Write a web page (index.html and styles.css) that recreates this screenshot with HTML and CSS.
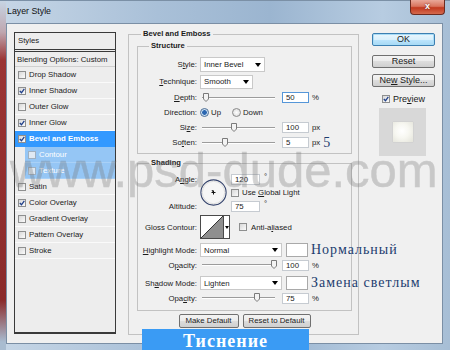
FILE: index.html
```html
<!DOCTYPE html>
<html lang="en">
<head>
    <meta charset="UTF-8">
    <meta name="viewport" content="width=device-width, initial-scale=1.0">
    <title>Layer Style</title>
    <link rel="stylesheet" href="styles.css">
</head>
<body>
    <div class="window">
        <div class="titlebar">
            <span class="title">Layer Style</span>
            <span class="close">x</span>
        </div>
        <div class="client">
            <div class="styles-list">
                <div class="list-head">Styles</div>
                <div class="list-row blend">Blending Options: Custom</div>
                <div class="list-row"><span class="cb"></span>Drop Shadow</div>
                <div class="list-row"><span class="cb on"><svg viewBox="0 0 6 6"><path d="M0.8 3L2.5 4.8L5.3 0.8"/></svg></span>Inner Shadow</div>
                <div class="list-row"><span class="cb"></span>Outer Glow</div>
                <div class="list-row"><span class="cb on"><svg viewBox="0 0 6 6"><path d="M0.8 3L2.5 4.8L5.3 0.8"/></svg></span>Inner Glow</div>
                <div class="list-row sel"><span class="cb on"><svg viewBox="0 0 6 6"><path d="M0.8 3L2.5 4.8L5.3 0.8"/></svg></span>Bevel and Emboss</div>
                <div class="list-row sub"><span class="cb"></span>Contour</div>
                <div class="list-row sub"><span class="cb"></span>Texture</div>
                <div class="list-row"><span class="cb"></span>Satin</div>
                <div class="list-row"><span class="cb on"><svg viewBox="0 0 6 6"><path d="M0.8 3L2.5 4.8L5.3 0.8"/></svg></span>Color Overlay</div>
                <div class="list-row"><span class="cb"></span>Gradient Overlay</div>
                <div class="list-row"><span class="cb"></span>Pattern Overlay</div>
                <div class="list-row"><span class="cb"></span>Stroke</div>
            </div>

            <fieldset class="group outer">
                <legend>Bevel and Emboss</legend>

                <fieldset class="group structure">
                    <legend>Structure</legend>
                    <div class="row">
                        <span class="lbl">S<u>t</u>yle:</span>
                        <div class="select w-style"><span>Inner Bevel</span><i class="arrow"></i></div>
                    </div>
                    <div class="row tech">
                        <span class="lbl"><u>T</u>echnique:</span>
                        <div class="select w-tech"><span>Smooth</span><i class="arrow"></i></div>
                    </div>
                    <div class="row first-slider">
                        <span class="lbl"><u>D</u>epth:</span>
                        <div class="slider"><span class="thumb" style="left: 5%"><svg viewBox="0 0 6 9"><path d="M0.5 0.5H5.5V6L3 8.5L0.5 6Z"/></svg></span></div>
                        <span class="num focus">50</span><span class="unit">%</span>
                    </div>
                    <div class="row">
                        <span class="lbl">Direction:</span>
                        <span class="radio on"></span><span class="radio-text">Up</span>
                        <span class="radio down"></span><span class="radio-text">Down</span>
                    </div>
                    <div class="row">
                        <span class="lbl">Si<u>z</u>e:</span>
                        <div class="slider"><span class="thumb" style="left: 44%"><svg viewBox="0 0 6 9"><path d="M0.5 0.5H5.5V6L3 8.5L0.5 6Z"/></svg></span></div>
                        <span class="num">100</span><span class="unit">px</span>
                    </div>
                    <div class="row">
                        <span class="lbl">So<u>f</u>ten:</span>
                        <div class="slider"><span class="thumb" style="left: 32%"><svg viewBox="0 0 6 9"><path d="M0.5 0.5H5.5V6L3 8.5L0.5 6Z"/></svg></span></div>
                        <span class="num">5</span><span class="unit">px</span><span class="note">5</span>
                    </div>
                </fieldset>

                <fieldset class="group shading">
                    <legend>Shading</legend>
                    <div class="angle">
                        <span class="lbl a-lbl">A<u>n</u>gle:</span>
                        <svg class="dial" viewBox="0 0 27 27"><circle class="ring" cx="13.5" cy="13.5" r="12.6"/><circle class="inner" cx="13.5" cy="13.5" r="11.2"/><path d="M11.5 13.5H15.5M13.5 11.5V15.5M13.5 13.5L12 11"/></svg>
                        <span class="field a-val"><span class="num short">120</span><span class="deg">°</span></span>
                        <span class="check a-check"><span class="cb"></span><span>Use <u>G</u>lobal Light</span></span>
                        <span class="lbl a-lbl2">Altitude:</span>
                        <span class="field a-val2"><span class="num short">75</span><span class="deg">°</span></span>
                    </div>
                    <div class="row gloss">
                        <span class="lbl">Gloss Contour:</span>
                        <div class="contour">
                            <svg viewBox="0 0 22 22"><path class="tri" d="M0 22L22 0V22Z"/><path class="diag" d="M0 22L22 0"/></svg>
                            <span class="contour-drop"><i class="arrow tiny"></i></span>
                        </div>
                        <span class="cb aa"></span><span>Anti-a<u>l</u>iased</span>
                    </div>
                    <div class="row mode">
                        <span class="lbl"><u>H</u>ighlight Mode:</span>
                        <div class="select w-mode"><span>Normal</span><i class="arrow"></i></div>
                        <span class="swatch"></span><span class="note">Нормальный</span>
                    </div>
                    <div class="row opacity">
                        <span class="lbl">O<u>p</u>acity:</span>
                        <div class="slider"><span class="thumb" style="left: 99%"><svg viewBox="0 0 6 9"><path d="M0.5 0.5H5.5V6L3 8.5L0.5 6Z"/></svg></span></div>
                        <span class="num">100</span><span class="unit">%</span>
                    </div>
                    <div class="row mode second">
                        <span class="lbl">Sh<u>a</u>dow Mode:</span>
                        <div class="select w-mode"><span>Lighten</span><i class="arrow"></i></div>
                        <span class="swatch"></span><span class="note">Замена светлым</span>
                    </div>
                    <div class="row opacity">
                        <span class="lbl">Opa<u>c</u>ity:</span>
                        <div class="slider"><span class="thumb" style="left: 75%"><svg viewBox="0 0 6 9"><path d="M0.5 0.5H5.5V6L3 8.5L0.5 6Z"/></svg></span></div>
                        <span class="num">75</span><span class="unit">%</span>
                    </div>
                </fieldset>

                <div class="defaults">
                    <span class="btn make">Make Default</span>
                    <span class="btn reset-def">Reset to Default</span>
                </div>
            </fieldset>

            <div class="side">
                <div class="btn big ok">OK</div>
                <div class="btn big reset">Reset</div>
                <div class="btn big new">Ne<u>w</u> Style...</div>
                <div class="preview-check"><span class="cb on"><svg viewBox="0 0 6 6"><path d="M0.8 3L2.5 4.8L5.3 0.8"/></svg></span><span>Pre<u>v</u>iew</span></div>
                <div class="preview"><div class="preview-swatch"></div></div>
            </div>
        </div>

        <div class="watermark">www.psd-dude.com</div>
        <div class="banner">Тиснение</div>
    </div>
</body>
</html>
```

FILE: styles.css
```css
* {
    box-sizing: border-box;
    margin: 0;
    padding: 0;
}

body {
    width: 450px;
    height: 350px;
    overflow: hidden;
    font-family: 'Liberation Sans', Arial, sans-serif;
    font-size: 7.8px;
    color: #1b1b1b;
    background: #b3c7dc;
}

u {
    text-decoration: underline;
}

/* window frame */
.window {
    position: relative;
    height: 350px;
    display: flex;
    flex-direction: column;
    box-shadow: inset 0 1px 0 #7b90a6;
    background:
        linear-gradient(#c7d6e5 0, #bfa7b0 32px, #9b3434 60px, #8a2a2a 300px, #a9bcd0 342px) left top / 6px 100% no-repeat,
        linear-gradient(to right, #c6d6e6, #a9c0d8 35%, #9bb5d0 60%, #b7cce1 85%, #a7bed5);
}

.titlebar {
    height: 23px;
    display: flex;
    align-items: flex-start;
}

.title {
    padding-left: 7px;
    line-height: 22px;
    font-size: 8.8px;
    color: #111;
}

.close {
    margin-left: auto;
    margin-right: 5px;
    width: 35px;
    height: 15px;
    border: 1px solid #6c2b20;
    border-top: none;
    border-radius: 0 0 4px 4px;
    background: linear-gradient(#e9a899 0, #d9745e 45%, #c2391f 55%, #d46a4e 100%);
    color: #fff;
    font-weight: bold;
    font-size: 9px;
    line-height: 13px;
    text-align: center;
    text-shadow: 0 0 2px #5a1a10;
}

.client {
    flex: 1;
    margin: 0 7px 6px 6px;
    border: 1px solid #7b8fa5;
    background: #f0f0f0;
    display: flex;
    align-items: flex-start;
    padding: 5px 0 0 7px;
}

/* styles list */
.styles-list {
    width: 102px;
    height: 302px;
    margin-top: 3px;
    border: 1px solid #3a3a3a;
    border-bottom-width: 2px;
    background: #ededed;
}

.list-head {
    height: 19px;
    padding-left: 3px;
    line-height: 16px;
    border-bottom: 3px double #3a3a3a;
}

.list-row {
    height: 16px;
    display: flex;
    align-items: center;
    padding-left: 3px;
    border-bottom: 1px solid #fafafa;
    white-space: nowrap;
}

.list-row.blend {
    height: 15px;
    padding-left: 2px;
    border-bottom-color: #cfcfcf;
}

.list-row.sel {
    background: #3399ff;
    color: #fff;
    font-weight: bold;
    border-bottom-color: #3399ff;
}

.list-row.sub {
    margin-left: 10px;
    padding-left: 3px;
    background: #95c6f5;
    color: #fff;
    border-bottom-color: #a9d1f7;
}

.list-row.sub .cb {
    background: #dfe9f3;
    border-color: #9fb0c0;
}

.cb {
    flex: none;
    width: 8px;
    height: 8px;
    margin-right: 3px;
    border: 1px solid #8e8f8f;
    background: linear-gradient(135deg, #d8d8d8, #fbfbfb);
    display: flex;
}

.cb svg {
    width: 6px;
    height: 6px;
    fill: none;
    stroke: #1f3f8a;
    stroke-width: 1.3;
}

/* group boxes */
.group {
    min-width: 0;
    border: 1px solid #c2c2c2;
}

.group legend {
    font-weight: bold;
    font-size: 7.6px;
    line-height: 10px;
    padding: 0 2px;
    margin-left: 11px;
}

.outer {
    width: 231px;
    margin-left: 12px;
    padding: 0 6px 6px 8px;
}

.outer > legend {
    margin-left: 4px;
}

.structure {
    margin-top: 2px;
    padding: 6px 0 3px 0;
}

.shading {
    margin-top: 4px;
    padding: 5px 0 4px 0;
}

.row {
    display: flex;
    align-items: center;
    height: 15px;
    white-space: nowrap;
}

.row.tech {
    margin-top: 2px;
}

.row.first-slider {
    margin-top: 1px;
}

.lbl {
    flex: none;
    width: 59px;
    margin-right: 3px;
    text-align: right;
}

.select {
    flex: none;
    height: 14px;
    padding-left: 3px;
    background: #fff;
    border: 1px solid #c9c9c9;
    display: flex;
    align-items: center;
    justify-content: space-between;
}

.w-style {
    width: 65px;
    height: 15px;
}

.w-tech {
    width: 53px;
}

.w-mode {
    width: 82px;
}

.arrow {
    width: 0;
    height: 0;
    margin-right: 3px;
    border-left: 3.5px solid transparent;
    border-right: 3.5px solid transparent;
    border-top: 4px solid #000;
}

.arrow.tiny {
    margin: 0;
    border-left-width: 2px;
    border-right-width: 2px;
    border-top-width: 3px;
}

.slider {
    position: relative;
    flex: none;
    width: 73px;
    height: 12px;
    margin-left: 2px;
    background:
        linear-gradient(#9c9c9c, #9c9c9c) 0 5px / 100% 1px no-repeat,
        linear-gradient(#fff, #fff) 0 6px / 100% 1px no-repeat;
}

.thumb {
    position: absolute;
    top: 1px;
    width: 6px;
    height: 9px;
    margin-left: -3px;
    display: flex;
}

.thumb svg {
    width: 6px;
    height: 9px;
    fill: #f3f3f3;
    stroke: #7a7a7a;
    stroke-width: 1;
}

.num {
    flex: none;
    width: 27px;
    height: 11px;
    margin-left: 7px;
    padding-left: 3px;
    line-height: 9px;
    background: #fff;
    border: 1px solid #c6cbd1;
}

.num.focus {
    border-color: #5596d8;
}

.num.short {
    width: 29px;
    margin-left: 0;
}

.unit {
    margin-left: 3px;
}

.radio {
    flex: none;
    width: 9px;
    height: 9px;
    border: 1px solid #8a8a8a;
    border-radius: 50%;
    background: radial-gradient(circle, #fefefe, #d6d6d6);
}

.radio.on {
    border-color: #4a6c94;
    background: radial-gradient(circle, #2b66b0 0, #2b66b0 2px, #bcd7f0 2.6px, #fff 4.5px);
}

.radio-text {
    margin-left: 2px;
}

.radio.down {
    margin-left: 11px;
}

.note {
    margin-left: 3px;
    font-family: 'Liberation Serif', serif;
    font-size: 14px;
    letter-spacing: 1px;
    color: #1d3d6f;
}

/* angle & altitude */
.angle {
    display: grid;
    grid-template-columns: 59px 28px auto;
    grid-template-rows: 12px 15px 12px;
    column-gap: 3px;
    align-items: center;
    white-space: nowrap;
}

.a-lbl {
    grid-column: 1;
    grid-row: 1;
    width: auto;
    margin: 0;
}

.a-lbl2 {
    grid-column: 1;
    grid-row: 3;
    width: auto;
    margin: 0;
}

.dial {
    grid-column: 2;
    grid-row: 1 / 4;
    width: 27px;
    height: 27px;
}

.dial .ring {
    fill: #f6f6f6;
    stroke: #34436c;
    stroke-width: 1.1;
}

.dial .inner {
    fill: none;
    stroke: #dedede;
    stroke-width: 1;
}

.dial path {
    fill: none;
    stroke: #111;
    stroke-width: 1;
}

.field {
    display: flex;
    align-items: flex-start;
}

.a-val {
    grid-column: 3;
    grid-row: 1;
}

.a-val2 {
    grid-column: 3;
    grid-row: 3;
}

.deg {
    margin-left: 4px;
    line-height: 6px;
}

.check {
    display: flex;
    align-items: center;
}

.a-check {
    grid-column: 3;
    grid-row: 2;
}

/* gloss contour */
.row.gloss {
    height: 24px;
    margin-top: 3px;
}

.contour {
    flex: none;
    display: flex;
    width: 30px;
    height: 24px;
    border: 1px solid #4a4a4a;
    background: #fff;
}

.contour svg {
    width: 22px;
    height: 22px;
}

.contour .tri {
    fill: #8f8f8f;
}

.contour .diag {
    fill: none;
    stroke: #333;
    stroke-width: 1;
}

.contour-drop {
    flex: 1;
    border-left: 1px solid #4a4a4a;
    display: flex;
    align-items: center;
    justify-content: center;
}

.cb.aa {
    margin-left: 9px;
    margin-right: 4px;
}

.row.mode {
    height: 14px;
    margin-top: 4px;
}

.row.mode.second {
    margin-top: 3px;
}

.row.opacity {
    height: 16px;
}

.swatch {
    flex: none;
    width: 22px;
    height: 14px;
    margin-left: 4px;
    background: #fff;
    border: 1px solid #a9a9a9;
}

/* buttons */
.btn {
    display: block;
    height: 14px;
    border: 1px solid #707070;
    border-radius: 2px;
    background: linear-gradient(#f3f3f3 0, #ebebeb 50%, #dddddd 50%, #cfcfcf 100%);
    text-align: center;
    line-height: 12px;
    white-space: nowrap;
}

.defaults {
    display: flex;
    justify-content: center;
    gap: 4px;
    margin-top: 3px;
}

.make {
    width: 60px;
}

.reset-def {
    width: 68px;
}

.side {
    width: 63px;
    margin-left: 13px;
    margin-top: 4px;
}

.btn.big {
    height: 13px;
    font-size: 9px;
    line-height: 11px;
}

.btn.ok {
    border-color: #3c7fb1;
    background: linear-gradient(#eaf6fd 0, #d9f0fc 50%, #bee6fd 50%, #a7d9f5 100%);
    box-shadow: inset 0 0 0 1px #a9dcf6;
}

.btn.reset {
    margin-top: 9px;
}

.btn.new {
    margin-top: 6px;
}

.preview-check {
    display: flex;
    align-items: center;
    height: 11px;
    margin-top: 6px;
    padding-left: 10px;
    font-size: 9px;
}

.preview {
    width: 47px;
    height: 48px;
    margin: 4px 0 0 7px;
    background: #d8d8d8;
    display: flex;
    align-items: center;
    justify-content: center;
}

.preview-swatch {
    width: 20px;
    height: 20px;
    background: radial-gradient(circle at 45% 45%, #ffffff 0, #f7f7f1 45%, #e3e3d9 100%);
    box-shadow: 0 0 1px #b8b8b8;
}

/* overlays */
.watermark {
    position: absolute;
    left: 10px;
    top: 146px;
    font-size: 49px;
    line-height: 49px;
    color: #777;
    -webkit-text-stroke: 0.5px #777;
    opacity: 0.32;
    white-space: nowrap;
    pointer-events: none;
}

.banner {
    position: absolute;
    left: 142px;
    top: 329px;
    width: 167px;
    height: 21px;
    background: #3a9bf4;
    color: #fff;
    font-family: 'Liberation Serif', serif;
    font-weight: bold;
    font-size: 18px;
    line-height: 24px;
    letter-spacing: 1px;
    text-align: center;
}
```
